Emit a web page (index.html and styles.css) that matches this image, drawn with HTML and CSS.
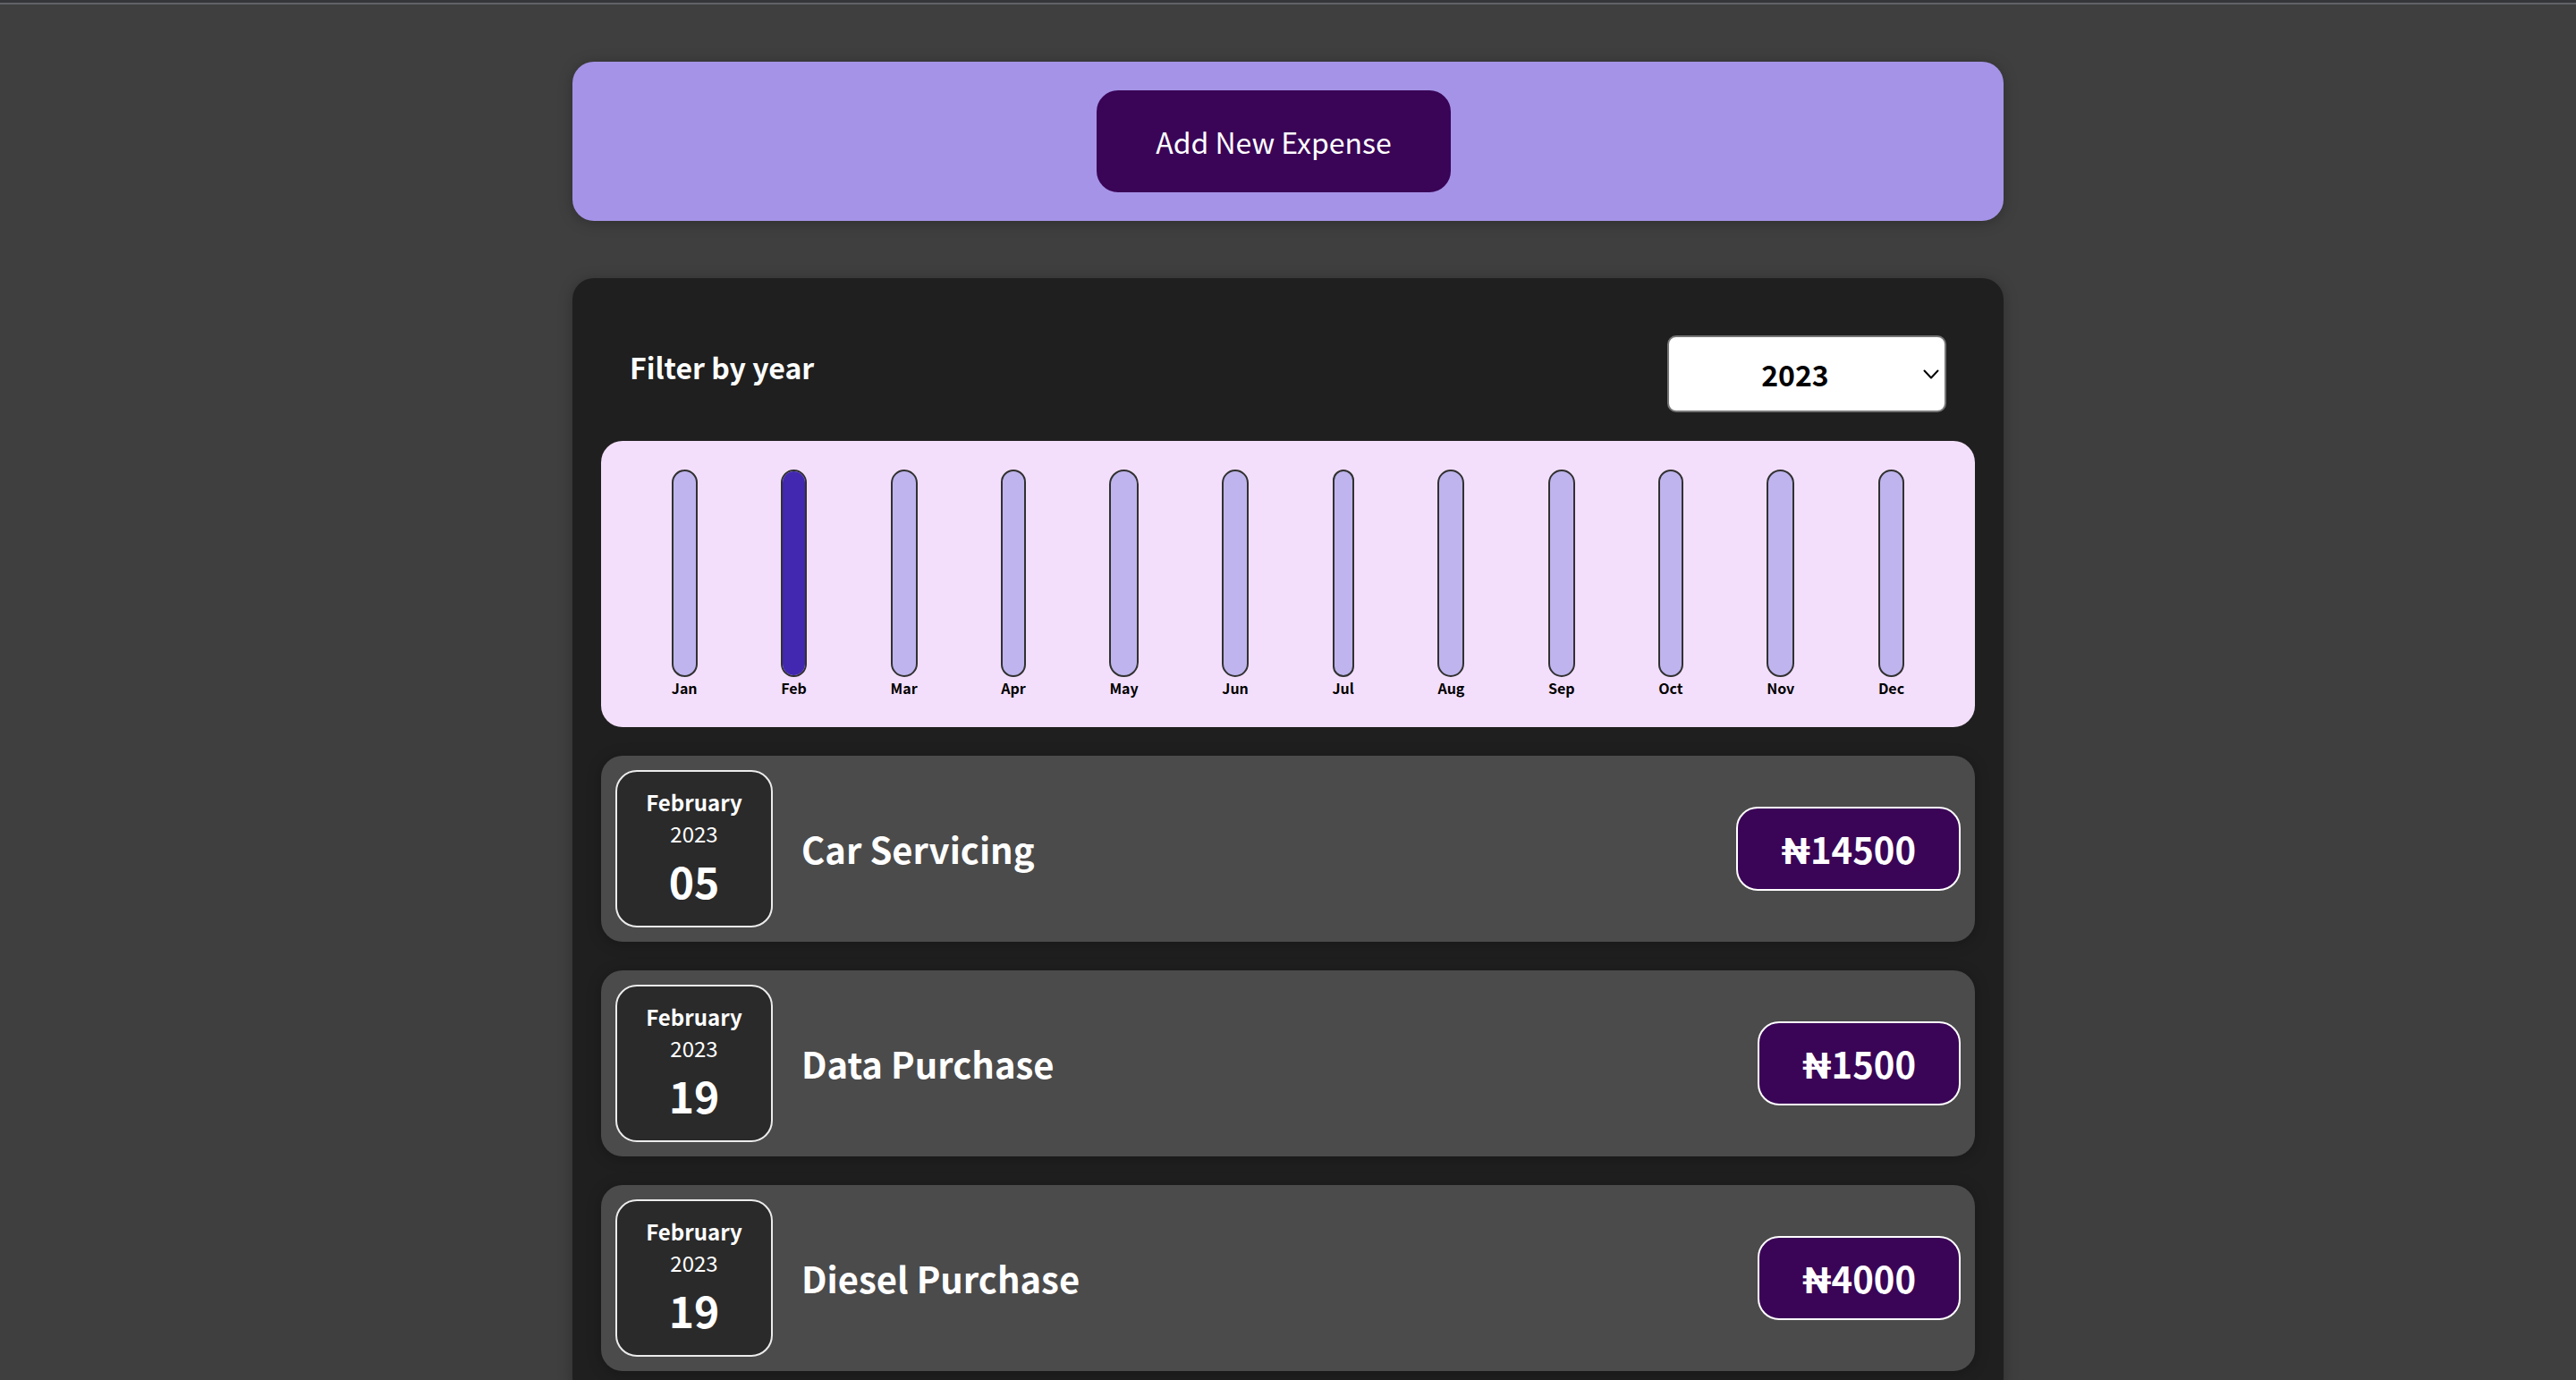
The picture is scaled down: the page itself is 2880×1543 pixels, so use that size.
FILE: index.html
```html
<!DOCTYPE html>
<html lang="en">
<head>
  <meta charset="utf-8">
  <meta name="viewport" content="width=device-width, initial-scale=1">
  <title>Expenses</title>
  <link rel="stylesheet" href="styles.css">
</head>
<body>
  <div class="top-edge"></div>
  <main class="page">
    <section class="new-expense">
      <button class="new-expense-button" type="button">Add New Expense</button>
    </section>

    <section class="expenses">
      <div class="filter">
        <label class="filter-label" for="year">Filter by year</label>
        <div class="filter-control">
          <select class="filter-select" id="year">
            <option>2023</option>
            <option>2022</option>
            <option>2021</option>
          </select>
          <svg class="filter-arrow" viewBox="0 0 18 12" aria-hidden="true"><path d="M1.5 1.5 9 9.5 16.5 1.5"/></svg>
        </div>
      </div>

      <div class="chart">
        <div class="chart-month"><div class="chart-bar"></div><div class="chart-label">Jan</div></div>
        <div class="chart-month"><div class="chart-bar"><div class="chart-fill" style="height: 100%"></div></div><div class="chart-label">Feb</div></div>
        <div class="chart-month"><div class="chart-bar"></div><div class="chart-label">Mar</div></div>
        <div class="chart-month"><div class="chart-bar"></div><div class="chart-label">Apr</div></div>
        <div class="chart-month"><div class="chart-bar"></div><div class="chart-label">May</div></div>
        <div class="chart-month"><div class="chart-bar"></div><div class="chart-label">Jun</div></div>
        <div class="chart-month"><div class="chart-bar"></div><div class="chart-label">Jul</div></div>
        <div class="chart-month"><div class="chart-bar"></div><div class="chart-label">Aug</div></div>
        <div class="chart-month"><div class="chart-bar"></div><div class="chart-label">Sep</div></div>
        <div class="chart-month"><div class="chart-bar"></div><div class="chart-label">Oct</div></div>
        <div class="chart-month"><div class="chart-bar"></div><div class="chart-label">Nov</div></div>
        <div class="chart-month"><div class="chart-bar"></div><div class="chart-label">Dec</div></div>
      </div>

      <ul class="expense-list">
        <li class="expense">
          <div class="date">
            <div class="date-month">February</div>
            <div class="date-year">2023</div>
            <div class="date-day">05</div>
          </div>
          <h2 class="expense-title">Car Servicing</h2>
          <div class="expense-price"><span class="currency">₦</span>14500</div>
        </li>
        <li class="expense">
          <div class="date">
            <div class="date-month">February</div>
            <div class="date-year">2023</div>
            <div class="date-day">19</div>
          </div>
          <h2 class="expense-title">Data Purchase</h2>
          <div class="expense-price"><span class="currency">₦</span>1500</div>
        </li>
        <li class="expense">
          <div class="date">
            <div class="date-month">February</div>
            <div class="date-year">2023</div>
            <div class="date-day">19</div>
          </div>
          <h2 class="expense-title">Diesel Purchase</h2>
          <div class="expense-price"><span class="currency">₦</span>4000</div>
        </li>
      </ul>
    </section>
  </main>
</body>
</html>
```
FILE: styles.css
```css
* {
  box-sizing: border-box;
}

body {
  margin: 0;
  background: #3f3f3f;
  color: #ffffff;
  font-family: "Noto Sans CJK JP", "Noto Sans", sans-serif;
}

.top-edge {
  height: 5px;
  background: #35363a;
  border-bottom: 2px solid #5f6368;
}

.page {
  display: flex;
  flex-direction: column;
  gap: 64px;
  max-width: 1600px;
  margin: 64px auto;
}

.new-expense,
.expenses {
  padding: 32px;
  border-radius: 24px;
  box-shadow: 0 2px 16px rgba(0, 0, 0, 0.25);
}

.new-expense {
  display: flex;
  justify-content: center;
  background: #a593e7;
}

.new-expense-button {
  margin: 0 32px 0 0;
  padding: 32px 64px;
  border: 2px solid #3a0557;
  border-radius: 24px;
  background: #3a0557;
  color: #ffffff;
  font: inherit;
  font-size: 32px;
  line-height: 46px;
  cursor: pointer;
}

.expenses {
  background: #1f1f1f;
}

.filter {
  display: flex;
  align-items: center;
  justify-content: space-between;
  padding: 32px;
}

.filter-label {
  padding-bottom: 16px;
  font-size: 32px;
  font-weight: 700;
  line-height: 46px;
}

.filter-control {
  position: relative;
}

.filter-select {
  appearance: none;
  display: block;
  width: 312px;
  height: 86px;
  padding: 0 26px 0 0;
  border: 2px solid #767676;
  border-radius: 10px;
  background: #ffffff;
  color: #000000;
  font: inherit;
  font-size: 32px;
  font-weight: 700;
  line-height: 46px;
  text-align: center;
  text-align-last: center;
}

.filter-arrow {
  position: absolute;
  top: 38px;
  right: 8px;
  width: 18px;
  height: 12px;
  fill: none;
  stroke: #000000;
  stroke-width: 2;
  stroke-linecap: round;
  stroke-linejoin: round;
  pointer-events: none;
}

.chart {
  display: flex;
  justify-content: space-around;
  padding: 32px;
  border-radius: 24px;
  background: #f3dffb;
  color: #000000;
}

.chart-month {
  display: flex;
  flex-direction: column;
}

.chart-bar {
  display: flex;
  flex-direction: column;
  justify-content: flex-end;
  height: 232px;
  overflow: hidden;
  border: 2px solid #313131;
  border-radius: 24px;
  background: #bfb4ed;
}

.chart-fill {
  background: #4227b0;
}

.chart-label {
  font-size: 16px;
  font-weight: 700;
  line-height: 24px;
  text-align: center;
}

.expense-list {
  display: flex;
  flex-direction: column;
  gap: 32px;
  margin: 32px 0 0;
  padding: 0;
  list-style: none;
}

.expense {
  display: flex;
  align-items: center;
  gap: 32px;
  padding: 16px;
  border-radius: 24px;
  background: #4b4b4b;
  box-shadow: 0 2px 16px rgba(0, 0, 0, 0.25);
}

.date {
  width: 176px;
  padding: 16px;
  border: 2px solid #ececec;
  border-radius: 24px;
  background: #2a2a2a;
  text-align: center;
}

.date-month,
.date-year {
  font-size: 24px;
  line-height: 35px;
}

.date-month,
.date-day {
  font-weight: 700;
}

.date-day {
  font-size: 48px;
  line-height: 70px;
}

.expense-title {
  flex: 1;
  margin: 0;
  font-size: 40px;
  font-weight: 700;
  line-height: 58px;
}

.expense-price {
  padding: 16px 48px;
  border: 2px solid #ffffff;
  border-radius: 24px;
  background: #3a0557;
  font-size: 40px;
  font-weight: 700;
  line-height: 58px;
}

.currency {
  font-family: Roboto, sans-serif;
  line-height: 1;
}
```
